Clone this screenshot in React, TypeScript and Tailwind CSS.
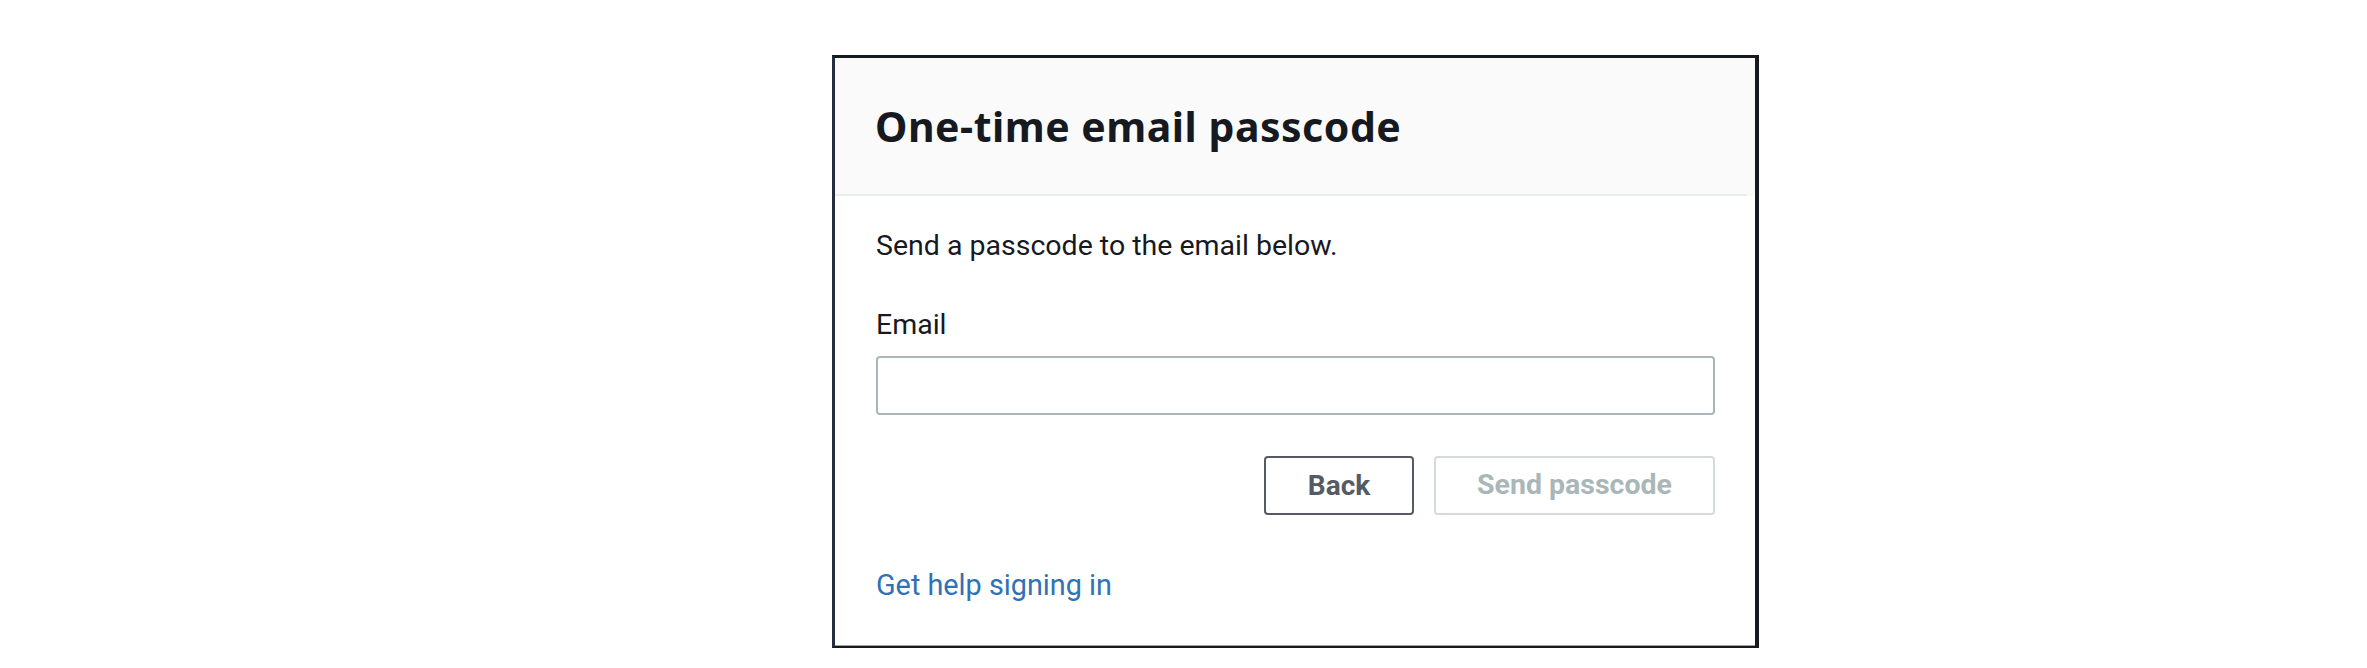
import React from "react";

export default function App() {
  return (
    <div
      className="w-full h-[668px] bg-white pl-[832px] pt-[55px]"
      style={{ fontFamily: 'Roboto, "Noto Sans", sans-serif' }}
    >
      <div className="w-[927px] h-[593px] flex flex-col border-l-[3px] border-l-[#232f3e] border-t-[3px] border-t-[#161a21] border-r-[4px] border-r-[#16191f] border-b-[2px] border-b-[#16191f]">
        <div className="flex-1 flex flex-col bg-white border-b border-b-[#a3a3a3]">
          <div className="h-[138px] bg-[#fafafa] flex flex-col">
            <div className="flex-1 pt-[42px] pl-[40px]">
              <h1
                className="text-[41px] leading-[53px] font-bold text-[#16191f] tracking-[0.5px]"
                style={{ fontFamily: '"Noto Sans", "Open Sans", sans-serif' }}
              >
                One-time email passcode
              </h1>
            </div>
            <div className="h-[2px] bg-[#eaeded] mr-[8px]" />
          </div>
          <div className="flex flex-col pl-[41px] pr-[40px] text-[#16191f]">
            <p className="mt-[30px] text-[28.5px] leading-[40px]">
              Send a passcode to the email below.
            </p>
            <label className="mt-[39px] text-[28.5px] leading-[40px] block">
              Email
            </label>
            <input
              type="email"
              className="mt-[11px] h-[59px] w-full rounded-[4px] border-2 border-[#aab7b8] bg-white outline-none px-4 text-[28px]"
            />
            <div className="mt-[41px] flex justify-end gap-[20px]">
              <button className="h-[59px] w-[150px] rounded-[4px] border-2 border-[#545b64] bg-white text-[28px] font-bold text-[#545b64]">
                Back
              </button>
              <button
                disabled
                className="h-[59px] w-[281px] rounded-[4px] border-2 border-[#d5dbdb] bg-white text-[28.5px] font-bold text-[#aab7b8]"
              >
                Send passcode
              </button>
            </div>
            <a
              href="#"
              className="mt-[50px] text-[28.8px] leading-[40px] text-[#2f72b6] self-start"
            >
              Get help signing in
            </a>
          </div>
        </div>
      </div>
    </div>
  );
}
